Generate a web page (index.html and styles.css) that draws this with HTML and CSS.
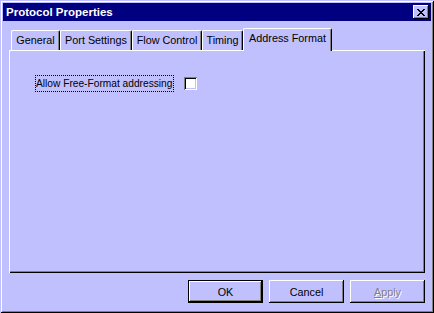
FILE: index.html
```html
<!DOCTYPE html>
<html lang="en">
<head>
    <meta charset="UTF-8"/>
    <title>Protocol Properties</title>
    <link rel="stylesheet" href="styles.css">
</head>
<body>
    <div class="window">
        <div class="titlebar">
            <span class="title">Protocol Properties</span>
            <button class="close" title="Close">
                <svg width="8" height="7" viewBox="0 0 8 7" shape-rendering="crispEdges">
                    <path d="M0 0h2v1h-2z M6 0h2v1h-2z M1 1h2v1h-2z M5 1h2v1h-2z M2 2h4v1h-4z M3 3h2v1h-2z M2 4h4v1h-4z M1 5h2v1h-2z M5 5h2v1h-2z M0 6h2v1h-2z M6 6h2v1h-2z" fill="#000"/>
                </svg>
            </button>
        </div>

        <div class="content">
            <div class="tabs">
                <div class="tab tab-general">General</div>
                <div class="tab tab-port">Port Settings</div>
                <div class="tab tab-flow">Flow Control</div>
                <div class="tab tab-timing">Timing</div>
                <div class="tab tab-address active">Address Format</div>
            </div>

            <div class="panel">
                <div class="field">
                    <label class="focus-label" for="freeFormat">Allow Free-Format addressing</label>
                    <span class="checkbox" id="freeFormat"></span>
                </div>
            </div>

            <div class="buttons">
                <button class="btn default">OK</button>
                <button class="btn">Cancel</button>
                <button class="btn disabled"><u>A</u>pply</button>
            </div>
        </div>
    </div>
</body>
</html>
```

FILE: styles.css
```css
body {
    margin: 0;
    padding: 0;
    font-family: "Liberation Sans", Arial, sans-serif;
    font-size: 10.5px;
    color: #000;
    background: #c0c0ff;
}
.window {
    width: 434px;
    height: 313px;
    box-sizing: border-box;
    padding: 3px;
    background: #c0c0ff;
    box-shadow: inset 1px 1px 0 #c0c0ff, inset -1px -1px 0 #000,
                inset 2px 2px 0 #fff, inset -2px -2px 0 #808080;
}
.titlebar {
    height: 18px;
    background: #000080;
    display: flex;
    align-items: center;
    justify-content: space-between;
    padding: 0 2px 0 3px;
}
.title {
    color: #fff;
    font-weight: bold;
    font-size: 11.5px;
    line-height: 18px;
}
.close {
    width: 16px;
    height: 14px;
    padding: 0;
    border: none;
    background: #c0c0ff;
    display: flex;
    align-items: center;
    justify-content: center;
    box-shadow: inset -1px -1px 0 #000, inset 1px 1px 0 #fff,
                inset -2px -2px 0 #808080;
}
.close svg {
    display: block;
    margin: 0 0 0 -1px;
}
.content {
    padding: 7px 6px 0 6px;
}
.tabs {
    display: flex;
    align-items: flex-end;
    height: 22px;
    padding-left: 2px;
    position: relative;
    z-index: 1;
}
.tab {
    box-sizing: border-box;
    height: 20px;
    line-height: 19px;
    font-size: 10.8px;
    text-align: center;
    white-space: nowrap;
    border-top: 1px solid #fff;
    border-left: 1px solid #fff;
    border-right: 1px solid #000;
    border-radius: 2px 2px 0 0;
    box-shadow: inset -1px 0 0 #808080;
}
.tab-general { width: 49px; }
.tab-port { width: 72px; }
.tab-flow { width: 70px; }
.tab-timing { width: 41px; }
.tab-address { width: 89px; }
.tab.active {
    height: 23px;
    margin-bottom: -1px;
    line-height: 18px;
    background: #c0c0ff;
}
.panel {
    box-sizing: border-box;
    height: 223px;
    background: #c0c0ff;
    box-shadow: inset 1px 1px 0 #fff, inset -1px -1px 0 #000,
                inset -2px -2px 0 #808080;
    padding: 25px 0 0 26px;
}
.field {
    display: flex;
    align-items: center;
    gap: 10px;
}
.focus-label {
    border: 1px dotted #000;
    padding: 0 1px 0 0;
    font-size: 10.2px;
    line-height: 15px;
}
.checkbox {
    width: 13px;
    height: 13px;
    box-sizing: border-box;
    background: #fff;
    box-shadow: inset 1px 1px 0 #808080, inset -1px -1px 0 #fff,
                inset 2px 2px 0 #000, inset -2px -2px 0 #c0c0ff;
}
.buttons {
    display: flex;
    justify-content: flex-end;
    gap: 6px;
    margin-top: 7px;
}
.btn {
    width: 75px;
    height: 23px;
    padding: 0;
    border: none;
    font-family: "Liberation Sans", Arial, sans-serif;
    font-size: 10.8px;
    color: #000;
    background: #c0c0ff;
    box-shadow: inset -1px -1px 0 #000, inset 1px 1px 0 #fff,
                inset -2px -2px 0 #808080;
}
.btn.default {
    box-shadow: inset 0 0 0 1px #000, inset -2px -2px 0 #000,
                inset 2px 2px 0 #fff, inset -3px -3px 0 #808080;
}
.btn.disabled {
    color: #808080;
    text-shadow: 1px 1px 0 #fff;
}
```
